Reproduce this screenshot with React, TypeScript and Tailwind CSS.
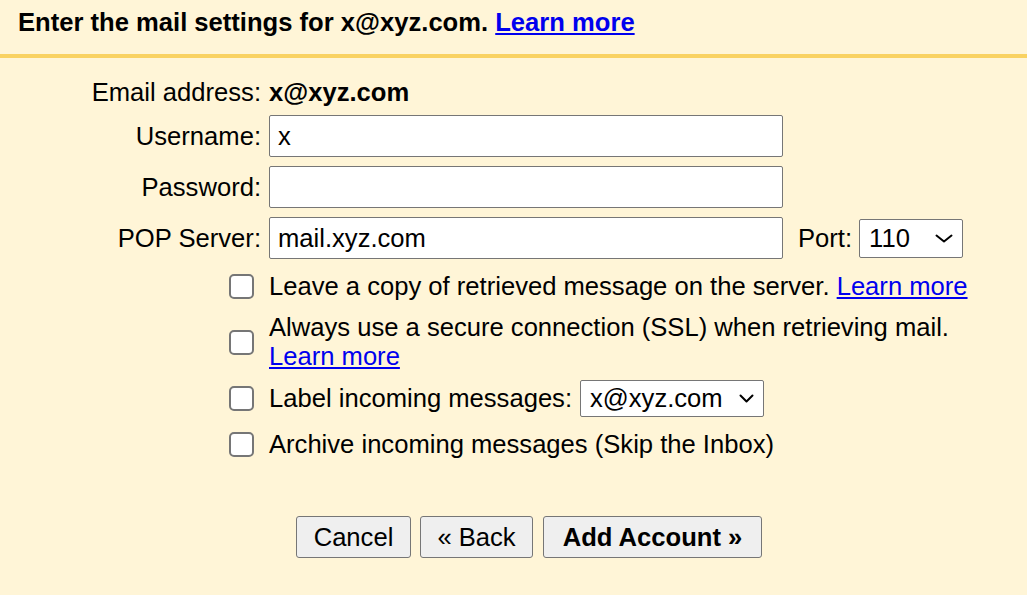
import type { ReactNode } from "react";

const Chevron = ({ w }: { w: number }) => (
  <svg width={w} height={9} viewBox={`0 0 ${w} 9`} fill="none">
    <polyline
      points={`1.5,1.5 ${w / 2},7.5 ${w - 1.5},1.5`}
      stroke="#000"
      strokeWidth={2}
      strokeLinecap="round"
      strokeLinejoin="round"
    />
  </svg>
);

const Checkbox = () => (
  <span className="block h-[25px] w-[25px] rounded-[5px] border-2 border-[#767676] bg-white" />
);

const Row = ({
  label,
  children,
  className,
}: {
  label?: ReactNode;
  children: ReactNode;
  className: string;
}) => (
  <div className={`flex items-center ${className}`}>
    <div className="flex w-[261px] shrink-0 justify-end">{label}</div>
    <div className="ml-2 flex min-w-0 flex-1 items-center">{children}</div>
  </div>
);

const CheckLabel = () => (
  <div className="pr-[7px]">
    <Checkbox />
  </div>
);

const TextInput = ({ value }: { value?: string }) => (
  <div className="flex h-[42px] w-[514px] items-center rounded-[2px] border border-[#767676] bg-white pl-2">
    {value}
  </div>
);

const Link = ({ children }: { children: ReactNode }) => (
  <a href="#" className="text-[#0000ee] underline">
    {children}
  </a>
);

export default function App() {
  return (
    <div className="min-h-screen w-full bg-[#fff5d7] font-['Liberation_Sans',Arial,sans-serif] text-[25.6px] leading-[29px] text-black">
      {/* Heading */}
      <div className="h-[58px] border-b-4 border-[#f9d262] pl-[18px] pt-2 font-bold">
        Enter the mail settings for x@xyz.com. <Link>Learn more</Link>
      </div>

      {/* Form */}
      <div className="flex flex-col pt-5">
        <Row label="Email address:" className="h-[29px]">
          <span className="font-bold">x@xyz.com</span>
        </Row>
        <Row label="Username:" className="mt-2 h-[42px]">
          <TextInput value="x" />
        </Row>
        <Row label="Password:" className="mt-[9px] h-[42px]">
          <TextInput />
        </Row>
        <Row label="POP Server:" className="mt-[9px] h-[42px]">
          <TextInput value="mail.xyz.com" />
          <span className="ml-[15px]">Port:</span>
          <div className="ml-[7px] flex h-[39px] w-[104px] items-center justify-between rounded-[2px] border border-[#767676] bg-white pl-[9px] pr-[9px]">
            <span>110</span>
            <Chevron w={18} />
          </div>
        </Row>

        <Row label={<CheckLabel />} className="mt-[13px] h-[29px]">
          <span>
            Leave a copy of retrieved message on the server. <Link>Learn more</Link>
          </span>
        </Row>
        <Row label={<CheckLabel />} className="mt-3">
          <span>
            Always use a secure connection (SSL) when retrieving mail.
            <br />
            <Link>Learn more</Link>
          </span>
        </Row>
        <Row label={<CheckLabel />} className="mt-[9px] h-[37px]">
          <span>Label incoming messages:</span>
          <div className="ml-[8px] flex h-[37px] w-[184px] items-center justify-between rounded-[2px] border border-[#767676] bg-white pl-[9px] pr-[9px]">
            <span>x@xyz.com</span>
            <Chevron w={15} />
          </div>
        </Row>
        <Row label={<CheckLabel />} className="mt-[13px] h-[29px]">
          <span>Archive incoming messages (Skip the Inbox)</span>
        </Row>

        {/* Buttons */}
        <div className="mt-[57px] flex pl-[296px]">
          <button
            type="button"
            className="h-[42px] w-[115px] rounded-[3px] border border-[#767676] bg-[#efefef]"
          >
            Cancel
          </button>
          <button
            type="button"
            className="ml-[9px] h-[42px] w-[113px] rounded-[3px] border border-[#767676] bg-[#efefef]"
          >
            « Back
          </button>
          <button
            type="button"
            className="ml-[10px] h-[42px] w-[219px] rounded-[3px] border border-[#767676] bg-[#efefef] font-bold"
          >
            Add Account »
          </button>
        </div>
      </div>
    </div>
  );
}
